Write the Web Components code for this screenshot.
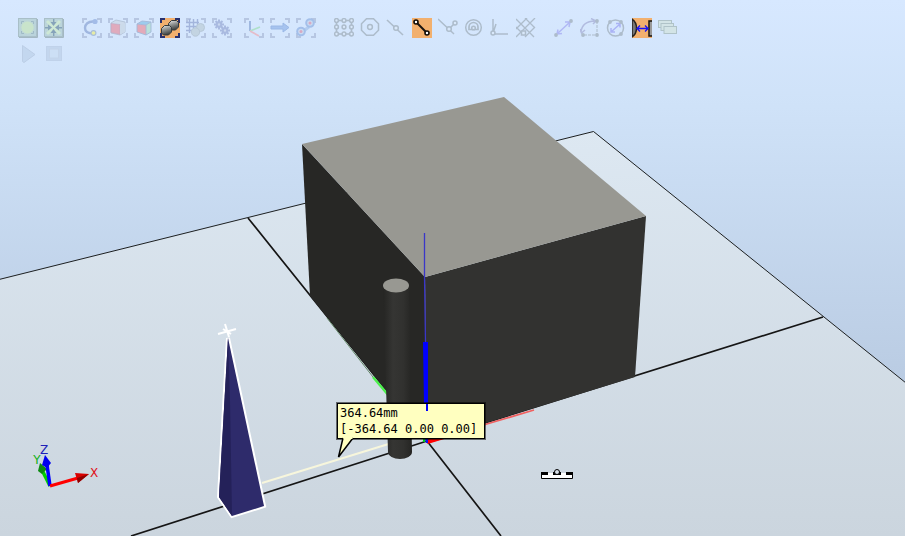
<!DOCTYPE html>
<html lang="en">
<head>
<meta charset="utf-8">
<title>3D view</title>
<style>
body { margin: 0; }
</style>
</head>
<body>
<graphics-view></graphics-view>
<script>
const corners = (c) => `<path d="M0 0h5v2H2v3H0zM15 0h5v5h-2V2h-3zM0 15h2v3h3v2H0zM18 15h2v5h-5v-2h3z" fill="${c}"/>`;
const pale = corners('#b6c6e2');
const line = '#adbccb';
const ring = (x, y, r = 2) => `<circle cx="${x}" cy="${y}" r="${r}" fill="#d9e8fa" stroke="${line}" stroke-width="1.500"/>`;
const gear = (x, y) => `<g stroke="#a9bae0" stroke-width="2"><path d="M${x - 5} ${y}h10M${x} ${y - 5}v10M${x - 3.5} ${y - 3.5}l7 7M${x + 3.5} ${y - 3.5}l-7 7"/><circle cx="${x}" cy="${y}" r="2.200" fill="#c9d8f0"/></g>`;
const tile = `<rect x=".5" y=".5" width="18" height="18" fill="url(#tile)" stroke="#a9bfc8"/><path d="M1 19.500H19.500V1" fill="none" stroke="#a3b7c2"/>
<defs><radialGradient id="tile"><stop offset="0" stop-color="#c6e0cb"/><stop offset="1" stop-color="#bad3dc"/></radialGradient></defs>`;
const nodes = [2.5, 10, 17.5].map(x => [2.5, 9, 16].map(y => ring(x, y, 1.9)).join('')).join('');

const ICONS = {
  fit: `${tile}<circle cx="9.500" cy="9.500" r="6" fill="#c9e4cb"/><path d="M3.500 6V3.500H6M13 3.500h2.500V6M3.500 13v2.500H6M15.500 13v2.500H13" fill="none" stroke="#9fbac6"/>`,
  center: `${tile}<path d="M3 3l13 13M16 3L3 16" stroke="#cee8d5" stroke-width="3"/><g fill="#86a3ba"><path d="M6.500 4h6l-3 4zM6.500 15h6l-3-4zM4 6.500v6l4-3zM15 6.500v6l-4-3z"/><path d="M9 1h1.400v4H9zM9 14h1.400v4H9zM1 9h4v1.400H1zM14 9h4v1.400h-4z"/></g>`,
  curve: `${pale}<path d="M12 3.500C6 3 3 6.500 3 10c0 4 3.500 5.500 8.500 5.500" fill="none" stroke="#a0b7e0" stroke-width="2.400"/><circle cx="13" cy="3.500" r="2.600" fill="#a3bce8"/><circle cx="11.500" cy="15" r="3" fill="#a9bfda"/><circle cx="11.500" cy="15" r="1.800" fill="#e6eca6"/>`,
  surface: `${pale}<path d="M3 5l5-3 9 2v10l-5 3-9-2z" fill="#cddbec" stroke="#b6c6da"/><path d="M3 5.500l9 1v10l-9-2z" fill="#dfabbd" stroke="#bba9c6" stroke-width=".6"/><path d="M12 7l5-2v9l-5 2.500z" fill="#cbdaea"/>`,
  part: `${pale}<path d="M3 6l5-3 9 1-5 3z" fill="#9dcbed"/><path d="M3 6l9 1v10l-9-3z" fill="#e3aab9"/><path d="M12 7l5-3v10l-5 3z" fill="#b9e1da"/><path d="M3 6l5-3 9 1v10l-5 3-9-3zM3 6l9 1v10M12 7l5-3" fill="none" stroke="#a3b8d8" stroke-width=".9"/>`,
  body: `<rect width="20" height="20" fill="#f2b06e"/>${corners('#28306d')}<defs><linearGradient id="metal" x2=".3" y2="1"><stop offset=".1" stop-color="#d8dad9"/><stop offset=".45" stop-color="#969998"/><stop offset="1" stop-color="#414544"/></linearGradient></defs><g fill="url(#metal)" stroke="#353a3c"><path d="M8.500 5.500l3-3h5l2 2v4.500l-3 3h-5l-2-2z"/><path d="M1.500 10.500l3-3h5l2 2v4.500l-3 3h-5l-2-2z"/></g>`,
  mechanism: `${pale}<path d="M0 4.500h13M0 8.500h13M0 12.500h6M3.500 1v14M7.500 1v12M11.500 1v7" stroke="#a3b5dc" stroke-width="1.400"/><g fill="#c3d4e2" stroke="#b7c8d8"><circle cx="14.500" cy="9.500" r="4"/><circle cx="9.500" cy="14" r="4.200"/></g>`,
  gears: `${pale}${gear(7, 6.5)}${gear(13, 12.5)}`,
  frame: `${pale}<path d="M6 3v10" stroke="#9fb8e0" stroke-width="2"/><path d="M6 13l10-4" stroke="#aee0ca" stroke-width="1.800"/><path d="M6 13l9 5" stroke="#e5bcc9" stroke-width="1.800"/>`,
  target: `${pale}<path d="M1 8h12V5l6 4.500-6 4.500v-3H1z" fill="#a6c3ef" stroke="#9ab8e6"/>`,
  path: `${pale}<path d="M7 11l5-3 2 2-5 4z" fill="#b3cdf0"/><g fill="#cadbf1" stroke="#a3bfea" stroke-width="2"><circle cx="14" cy="5" r="3.800"/><circle cx="5" cy="13.500" r="3.800"/></g><circle cx="14" cy="5" r="1.500" fill="#d8a9c2"/><circle cx="5" cy="13.500" r="1.500" fill="#d8a9c2"/>`,
  object: `<rect x="2.500" y="2.500" width="15" height="13.500" fill="none" stroke="${line}" stroke-width="1.600"/>${nodes}`,
  circle: `<path d="M6.500 .8h7l5 5v6.500l-5 5h-7l-5-5V5.800z" fill="none" stroke="${line}" stroke-width="1.500"/>${ring(10, 9, 2.4)}`,
  middle: `<path d="M1 2l16 15" stroke="${line}" stroke-width="1.600"/>${ring(10, 10, 2.3)}`,
  end: `<rect width="20" height="20" fill="#f2b06e"/><path d="M4 4l11 11" stroke="#181310" stroke-width="2"/><g fill="#fff" stroke="#100c08" stroke-width="1.600"><circle cx="4" cy="4" r="2"/><circle cx="15" cy="15" r="2"/></g>`,
  edge: `<path d="M0 1l16 15M11 11l6-6" stroke="${line}" stroke-width="1.500"/>${ring(11, 11, 2.3)}${ring(17, 5)}`,
  gravity: `<circle cx="9.500" cy="9.500" r="7.800" fill="none" stroke="${line}" stroke-width="1.500"/><path d="M5 11.500V9a4.500 4.500 0 019 0v2.500z" fill="none" stroke="${line}" stroke-width="1.700"/>${ring(9.5, 10, 1.8)}`,
  local: `<path d="M3 1v15h15M3 15l3-9" fill="none" stroke="${line}" stroke-width="1.500"/>${ring(3, 15)}`,
  grid: `<path d="M0 11L11 0M0 19L19 0M9 19l10-10M0 1l18 18M9 0l10 10M0 9l8 8" stroke="${line}" stroke-width="1.300"/><rect x="5.500" y="13" width="4" height="4" fill="#d9e8fa" stroke="${line}" stroke-width="1.500"/>`,
  points: `<path d="M3 16L16 4M4 11.500L3 16l5-.5M11 4l5 0-1 5" fill="none" stroke="#b0b8f5" stroke-width="1.500"/><circle cx="2" cy="17" r="1.900" fill="${line}"/><circle cx="17" cy="3" r="1.900" fill="${line}"/>`,
  angle: `<path d="M17 3v14H3" fill="none" stroke="${line}" stroke-dasharray="3 1"/><path d="M1 14C2 6 7 3 15 3M-0 11l1.500 4 3.500-3M11 .5l5 2.500-3 3" fill="none" stroke="#b2bce0" stroke-width="1.500"/><g fill="${line}"><circle cx="17" cy="3" r="1.900"/><circle cx="17" cy="17" r="1.900"/><circle cx="3" cy="17" r="1.900"/></g>`,
  diameter: `<circle cx="9.500" cy="10" r="8" fill="none" stroke="${line}" stroke-width="1.500"/><path d="M5 14l9-8M5 10v4h4M10 5.500h4v4" fill="none" stroke="#aab3f5" stroke-width="1.500"/><g fill="${line}"><circle cx="4" cy="4" r="1.900"/><circle cx="15" cy="4" r="1.900"/><circle cx="15" cy="16" r="1.900"/></g>`,
  minimum: `<rect width="20" height="20" fill="#f2b06e"/><path d="M0 1C3 3 4.500 6 4.500 10S3 17 0 19z" fill="#777" stroke="#27231f" stroke-width="1.500"/><path d="M20 3h-3v15h3" fill="#999" stroke="#17130f" stroke-width="1.500"/><path d="M5 10.500h11M8 7.500l-3 3 3 3M13 7.500l3 3-3 3" fill="none" stroke="#1712f5" stroke-width="1.300"/>`,
  keep: `<g fill="#d3e4e6" stroke="#b0c3c8"><rect x=".5" y="2.500" width="13" height="7"/><rect x="3" y="5.500" width="12.500" height="7"/><rect x="6" y="8.500" width="12.500" height="7"/></g>`,
  play: `<path d="M4.500 1.500L17 10.500 6 18.500l-1.500-1z" fill="#c3d7ef" stroke="#bccee6"/>`,
  stop: `<rect x="2.500" y="2.500" width="15" height="14" fill="#c3d6ee" stroke="#c0d2ea"/><rect x="5.500" y="5" width="9" height="9" fill="#ccdff5" stroke="#c3d4ea"/>`
};

const ROWS = [
  [[['fit', 'View all'], ['center', 'View center']],
   [['curve', 'Curve selection'], ['surface', 'Surface selection'], ['part', 'Part selection'], ['body', 'Body selection', 1], ['mechanism', 'Group selection'], ['gears', 'Mechanism selection']],
   [['frame', 'Frame selection'], ['target', 'Target selection'], ['path', 'Path selection']],
   [['object', 'Snap object'], ['circle', 'Snap center'], ['middle', 'Snap mid point'], ['end', 'Snap end point', 1], ['edge', 'Snap edge'], ['gravity', 'Snap gravity'], ['local', 'Snap local origin'], ['grid', 'Snap grid']],
   [['points', 'Point to point'], ['angle', 'Angle'], ['diameter', 'Diameter'], ['minimum', 'Minimum distance', 1], ['keep', 'Keep measurements']]],
  [[['play', 'Play'], ['stop', 'Stop']]]
];

class ToolButton extends HTMLElement {
  constructor() {
    super();
    this.attachShadow({ mode: 'open' });
  }
  connectedCallback() {
    this.shadowRoot.innerHTML = `<style>
      :host { display: block; }
      button { display: block; width: 20px; height: 20px; padding: 0; border: 0; background: none; cursor: pointer; }
      svg { display: block; width: 20px; height: 20px; }
    </style>
    <button type="button" aria-label="${this.getAttribute('label')}" aria-pressed="${this.hasAttribute('active')}">
      <svg viewBox="0 0 20 20" fill="none" aria-hidden="true">${ICONS[this.getAttribute('icon')]}</svg>
    </button>`;
  }
}

class ViewToolbar extends HTMLElement {
  constructor() {
    super();
    const group = (items) => `<div class="group">${items.map(([icon, label, on]) => `<tool-button icon="${icon}" label="${label}"${on ? ' active' : ''}></tool-button>`).join('')}</div>`;
    this.attachShadow({ mode: 'open' }).innerHTML = `<style>
      :host { display: flex; flex-direction: column; gap: 6px; padding: 18px; }
      .row { display: flex; flex-wrap: wrap; gap: 6px 18px; }
      .group { display: flex; gap: 6px; }
      .group:nth-child(3) { margin-left: -6px; }
    </style>${ROWS.map(r => `<div class="row">${r.map(group).join('')}</div>`).join('')}`;
  }
}

class SceneCanvas extends HTMLElement {
  constructor() {
    super();
    this.attachShadow({ mode: 'open' }).innerHTML = `<style>
      :host { display: block; }
      svg { display: block; width: 100%; height: 100%; }
      text { font: 12px "DejaVu Sans", sans-serif; text-anchor: middle; }
    </style>
    <svg viewBox="0 0 905 536" preserveAspectRatio="xMidYMid slice" role="img" aria-label="Box, cylinder and pyramid on a floor">
      <defs>
        <linearGradient id="sky" gradientUnits="userSpaceOnUse" x1="0" y1="0" x2="0" y2="536"><stop stop-color="#d7e8ff"/><stop offset=".2" stop-color="#cfe2f8"/><stop offset=".7" stop-color="#bacce3"/><stop offset="1" stop-color="#adc0d9"/></linearGradient>
        <linearGradient id="floor" gradientUnits="userSpaceOnUse" x1="0" y1="130" x2="0" y2="536"><stop stop-color="#dde8f2"/><stop offset="1" stop-color="#cbd5de"/></linearGradient>
        <linearGradient id="tube"><stop stop-color="#252523"/><stop offset=".35" stop-color="#353533"/><stop offset=".7" stop-color="#31312f"/><stop offset="1" stop-color="#252523"/></linearGradient>
      </defs>
      <rect width="905" height="536" fill="url(#sky)"/>
      <path d="M-1 279.500L593.500 131.500 906 383V537H-1z" fill="url(#floor)" stroke="#1c1f20"/>
      <path d="M131 536L427 441 823 317M248 218L427 441 501 536" stroke="#151515" stroke-width="1.700" fill="none"/>
      <path d="M302 144L425 277 427 441 310 296z" fill="#272725"/>
      <path d="M425 277L646 216 635 377 427 441z" fill="#323230"/>
      <path d="M302 144L504 97 646 216 425 277z" fill="#989892"/>
      <path d="M327 318L373 377" stroke="#638566"/>
      <path d="M373 377L427 441" stroke="#4cef4c" stroke-width="2.500"/>
      <path d="M534 410L480 426" stroke="#f06060" stroke-width="1.800"/>
      <path d="M485 425L428 442" stroke="#f01818" stroke-width="2.500"/>
      <path d="M427 442L447 436" stroke="#f00" stroke-width="4"/>
      <path d="M423 439v3h2v-3z" fill="#00d018"/><path d="M425 439h3v4h-2z" fill="#1010f0"/>
      <path d="M424.500 233V277L425.500 343" stroke="#3a36c8" fill="none" stroke-width="1.300"/>
      <path d="M423 342h5v64h-4z" fill="#0000ff"/>
      <path d="M262 483L395 442" stroke="#f7f6dc" stroke-width="2"/>
      <path d="M383 286L388 452a12 7 0 0024 0L409 286z" fill="url(#tube)"/>
      <ellipse cx="396" cy="285.500" rx="13" ry="7" fill="#989892"/>
      <path d="M228 338L219 497 232 516 264 506z" fill="#2e2b6b" stroke="#fff" stroke-width="4"/>
      <path d="M228 338L219 497 232 516 264 506z" fill="#2e2b6b"/>
      <path d="M228 338L219 497 232 516 230 400z" fill="#242159"/>
      <path d="M218 334L236 329M225 324L229 337M223 329L231 334" stroke="#fff" stroke-width="2"/>
      <path d="M50 486L42 470" stroke="#00d000" stroke-width="3.500"/>
      <path d="M40 463L47 469 42 474 38 471z" fill="#0c8a12"/>
      <path d="M50 486L47 465" stroke="#0000ff" stroke-width="3.500"/>
      <path d="M45 455L51 463 47 468 42 465z" fill="#0000f0"/>
      <path d="M50 486L78 478" stroke="#ff0000" stroke-width="3"/>
      <path d="M75 473L89 474 78 483z" fill="#d80000"/><path d="M77 478L89 474 78 483z" fill="#8d0000"/>
      <text x="94" y="477" fill="#e01018">X</text><text x="44" y="454" fill="#2020b8">Z</text><text x="37" y="464" fill="#10b018">Y</text>
      <path d="M541.500 472.500H572.500V478.500H541.500z" fill="#fff" stroke="#000"/>
      <path d="M541 472h7v3h-7zM553 472h8v3h-8zM566 472h7v3h-7z" fill="#000"/>
      <circle cx="557" cy="472" r="2.500" fill="#d9e1ea" stroke="#000"/><path d="M548 472h5M561 472h5" stroke="#cdd6df" stroke-width="2"/>
    </svg>`;
  }
}

class MeasureLabel extends HTMLElement {
  constructor() {
    super();
    this.attachShadow({ mode: 'open' }).innerHTML = `<style>
      :host { display: block; box-sizing: border-box; padding: 1px 7px 1px 2px; border: 1px solid #000; outline: 1px solid #0008;
        background: #ffffc0; color: #000; font: 12px/16px "DejaVu Sans Mono", monospace; white-space: nowrap; }
      .tail { position: absolute; left: 0; top: 100%; width: 16px; height: 21px; overflow: visible; }
      .axis { position: absolute; left: 60%; top: 0; width: 2px; height: 7px; background: #00f; }
    </style>
    <slot></slot><span class="axis"></span>
    <svg class="tail" viewBox="0 0 16 21" aria-hidden="true"><path d="M5 0L0.500 19 15 0" fill="#ffffc0" stroke="#000" stroke-width="1.500"/><path d="M5.500 -1h9v2h-9z" fill="#ffffc0"/></svg>`;
  }
}

class GraphicsView extends HTMLElement {
  constructor() {
    super();
    this.attachShadow({ mode: 'open' }).innerHTML = `<style>
      :host { display: block; position: relative; min-height: 100vh; overflow: hidden; background: #d7e8ff; }
      scene-canvas { position: absolute; inset: 0; }
      view-toolbar { position: relative; }
      measure-label { position: absolute; left: 337px; top: 403px; }
    </style>
    <scene-canvas></scene-canvas>
    <view-toolbar role="toolbar" aria-label="View tools"></view-toolbar>
    <measure-label><div>364.64mm</div><div>[-364.64 0.00 0.00]</div></measure-label>`;
  }
}

customElements.define('tool-button', ToolButton);
customElements.define('view-toolbar', ViewToolbar);
customElements.define('scene-canvas', SceneCanvas);
customElements.define('measure-label', MeasureLabel);
customElements.define('graphics-view', GraphicsView);
</script>
</body>
</html>
